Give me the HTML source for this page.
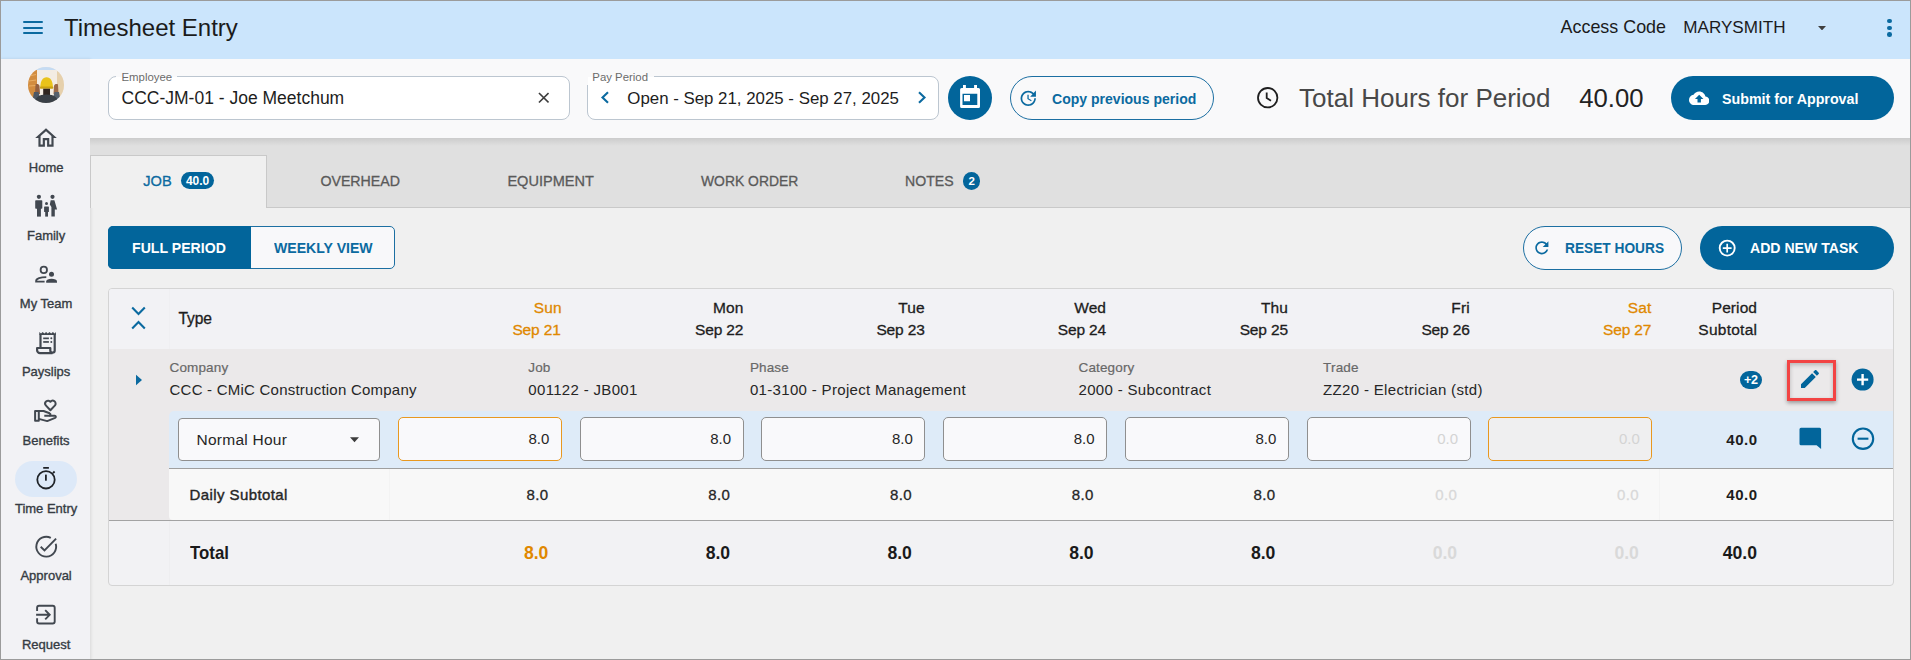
<!DOCTYPE html>
<html><head><meta charset="utf-8"><title>Timesheet Entry</title>
<style>
html,body{margin:0;padding:0;}
body{width:1911px;height:660px;position:relative;overflow:hidden;background:#f0f0f0;font-family:"Liberation Sans",sans-serif;}
.t{position:absolute;white-space:nowrap;line-height:1;}
.b{position:absolute;}
</style></head><body>
<div class="b" style="left:0px;top:0px;width:1911px;height:59px;background:#cbe5fc;"></div>
<div class="b" style="left:22.8px;top:21px;width:19.999999999999996px;height:2.1999999999999993px;background:#0b6aa0;border-radius:1px;"></div>
<div class="b" style="left:22.8px;top:26.6px;width:19.999999999999996px;height:2.1999999999999993px;background:#0b6aa0;border-radius:1px;"></div>
<div class="b" style="left:22.8px;top:32.1px;width:19.999999999999996px;height:2.200000000000003px;background:#0b6aa0;border-radius:1px;"></div>
<div class="t" style="top:16.00px;font-size:24px;font-weight:400;color:#1b1b1b;left:64.00px;">Timesheet Entry</div>
<div class="t" style="top:19.00px;font-size:17.9px;font-weight:400;color:#1b1b1b;left:1560.60px;">Access Code</div>
<div class="t" style="top:19.00px;font-size:17.1px;font-weight:400;color:#1b1b1b;left:1683.30px;">MARYSMITH</div>
<svg class="b" style="left:1818.4px;top:26px;" width="8" height="4.4" viewBox="0 0 8 4.4"><path d="M0 0h8L4 4.4z" fill="#3f3f3f"/></svg>
<div class="b" style="left:1887.4px;top:18.8px;width:4.599999999999909px;height:4.600000000000001px;background:#0b6aa0;border-radius:50%;"></div>
<div class="b" style="left:1887.4px;top:25.5px;width:4.599999999999909px;height:4.600000000000001px;background:#0b6aa0;border-radius:50%;"></div>
<div class="b" style="left:1887.4px;top:31.999999999999996px;width:4.599999999999909px;height:4.599999999999998px;background:#0b6aa0;border-radius:50%;"></div>
<div class="b" style="left:0px;top:59px;width:90px;height:601px;background:#f2f2f5;box-shadow:1px 0 3px rgba(0,0,0,0.10);"></div>
<svg class="b" style="left:28px;top:66.6px;" width="36" height="36" viewBox="0 0 36 36"><defs><clipPath id="av"><circle cx="18" cy="18" r="18"/></clipPath></defs><g clip-path="url(#av)"><rect width="36" height="36" fill="#efe6da"/><rect x="8" y="0" width="22" height="3" fill="#c5dbf3"/><path d="M0 4L9 3 9.5 31H0Z" fill="#d28c3f"/><path d="M1 9L8 7.5M1 14L8 13M1 19L8 18.5" stroke="#e9ad62" stroke-width="1.2"/><path d="M29 3L36 4V31H28Z" fill="#e6d0ac"/><rect x="9" y="3" width="20" height="27" fill="#f3ece3"/><path d="M7.5 17.5C9 16.5 11 17 11.5 19L12 27H7Z" fill="#95603f"/><path d="M30 17.5C28.5 16.5 26.5 17 26 19L25.5 27H30.5Z" fill="#9c6a48"/><path d="M4 36L6 25 10.5 25 12 31Z" fill="#4e5866"/><path d="M33 36L31 25 26.5 25 25 31Z" fill="#56606c"/><path d="M12.3 21C12.3 13.8 14.6 10.2 18.6 10.2S24.9 13.8 24.9 21Z" fill="#e9c31a"/><rect x="11.8" y="19.6" width="13.6" height="2.2" rx="1.1" fill="#caa212"/><path d="M15.2 21.8H22V28.5H15.2Z" fill="#2f2520"/><path d="M7 36C7 30.5 10.5 27.5 18.5 27.5S30 30.5 30 36Z" fill="#393f46"/></g></svg>
<div class="b" style="left:15px;top:461px;width:62px;height:35.5px;background:#dde9f8;border-radius:18px;"></div>
<div class="t" style="top:161.00px;font-size:13px;font-weight:400;color:#363c43;left:-253.90px;width:600px;text-align:center;-webkit-text-stroke:0.35px #363c43;">Home</div>
<div class="t" style="top:229.00px;font-size:13px;font-weight:400;color:#363c43;left:-253.90px;width:600px;text-align:center;-webkit-text-stroke:0.35px #363c43;">Family</div>
<div class="t" style="top:297.00px;font-size:13px;font-weight:400;color:#363c43;left:-253.90px;width:600px;text-align:center;-webkit-text-stroke:0.35px #363c43;">My Team</div>
<div class="t" style="top:365.00px;font-size:13px;font-weight:400;color:#363c43;left:-253.90px;width:600px;text-align:center;-webkit-text-stroke:0.35px #363c43;">Payslips</div>
<div class="t" style="top:434.00px;font-size:13px;font-weight:400;color:#363c43;left:-253.90px;width:600px;text-align:center;-webkit-text-stroke:0.35px #363c43;">Benefits</div>
<div class="t" style="top:502.00px;font-size:13px;font-weight:400;color:#363c43;left:-253.90px;width:600px;text-align:center;-webkit-text-stroke:0.35px #363c43;">Time Entry</div>
<div class="t" style="top:569.00px;font-size:13px;font-weight:400;color:#363c43;left:-253.90px;width:600px;text-align:center;-webkit-text-stroke:0.35px #363c43;">Approval</div>
<div class="t" style="top:638.00px;font-size:13px;font-weight:400;color:#363c43;left:-253.90px;width:600px;text-align:center;-webkit-text-stroke:0.35px #363c43;">Request</div>
<svg class="b" style="left:33px;top:125px;" width="26" height="26" viewBox="0 0 24 24"><path fill="#424850" d="M12 5.69l5 4.5V18h-2v-6H9v6H7v-7.81l5-4.5M12 3L2 12h3v8h6v-6h2v6h6v-8h3L12 3z"/></svg>
<svg class="b" style="left:30px;top:190px;" width="32" height="30" viewBox="0 0 32 30"><g fill="#424850"><circle cx="8.9" cy="6.8" r="2.1"/><rect x="5.2" y="10.3" width="7.1" height="8.4" rx="0.8"/><rect x="7" y="17" width="3.9" height="9.6"/><circle cx="16.5" cy="13.4" r="1.5"/><rect x="14.1" y="16.6" width="4.8" height="5.3" rx="0.5"/><rect x="15.2" y="21" width="2.8" height="5.6"/><circle cx="22.5" cy="6.8" r="2.1"/><path d="M20.7 10.3H24.4L27.1 19.6H24.8V26.6H21.4V17L19.8 14.6Z"/></g></svg>
<svg class="b" style="left:30px;top:262px;" width="32" height="26" viewBox="0 0 32 26"><g fill="none" stroke="#424850" stroke-width="1.8"><circle cx="13.8" cy="7.9" r="3.2"/><path d="M16.3 15.2C10.5 15.2 6.1 16.6 6.1 19V19.7H14.6"/></g><g fill="#424850"><circle cx="21.5" cy="12.2" r="2.5"/><path d="M16.2 20.7V19.3C16.2 17.6 18.6 16.7 21.6 16.7S27 17.6 27 19.3V20.7Z"/></g></svg>
<svg class="b" style="left:30px;top:328px;" width="32" height="30" viewBox="0 0 32 30"><g fill="none" stroke="#424850" stroke-width="2.2" stroke-linejoin="round"><path d="M10.5 19.5V6.2M24.7 6.2V22.5A2.2 2.2 0 0 1 20.3 22.5V20H7.1V22.2A2.9 2.9 0 0 0 10 25.1H22.5"/></g><path fill="#424850" d="M9.3 4.1L11 5.5 12.7 4.1 14.4 5.5 16.1 4.1 17.8 5.5 19.5 4.1 21.2 5.5 22.9 4.1 24.6 5.5 25.9 4.1V7H9.3Z"/><g fill="#424850"><rect x="13.2" y="9.5" width="5.7" height="1.7"/><rect x="13.2" y="13.1" width="5.7" height="1.7"/><circle cx="21.3" cy="10.3" r="1"/><circle cx="21.3" cy="13.9" r="1"/></g></svg>
<svg class="b" style="left:30px;top:396px;" width="32" height="30" viewBox="0 0 32 30"><g fill="none" stroke="#424850" stroke-width="2" stroke-linejoin="round"><path d="M20.4 14.2L15.8 9.4A2.9 2.9 0 0 1 20.4 5.8A2.9 2.9 0 0 1 25 9.4Z"/><rect x="5.1" y="14.9" width="3.7" height="9.8"/><path d="M8.8 15H13.6L19.6 17.3C21 17.9 20.6 19.7 19.1 19.7H14.3"/><path d="M8.8 22.9L17.2 25.1L25.1 21.9C26.3 21.3 25.9 19.6 24.6 19.7H19.2"/></g></svg>
<svg class="b" style="left:30px;top:463px;" width="32" height="30" viewBox="0 0 32 30"><g fill="none" stroke="#1f2328" stroke-width="1.8"><circle cx="16" cy="16.8" r="8.7"/><path d="M13.2 4.9H18.9M23 10.1L24.6 8.5"/></g><rect x="15" y="11.6" width="1.8" height="6.1" fill="#1f2328"/></svg>
<svg class="b" style="left:30px;top:532px;" width="32" height="30" viewBox="0 0 32 30"><g fill="none" stroke="#424850" stroke-width="1.9"><path d="M25.7 11.8A9.9 9.9 0 1 1 20.8 5.9"/><path d="M10.7 14.8L14.5 18.5L26.1 6.6"/></g></svg>
<svg class="b" style="left:30px;top:600px;" width="32" height="30" viewBox="0 0 32 30"><g fill="none" stroke="#424850" stroke-width="1.9"><path d="M7.1 10.9V7.8A2 2 0 0 1 9.1 5.8H22.7A2 2 0 0 1 24.7 7.8V21.5A2 2 0 0 1 22.7 23.5H9.1A2 2 0 0 1 7.1 21.5V18.2"/><path d="M6.1 14.8H19.6M15.2 10.2L19.7 14.8 15.2 19.4"/></g></svg>
<div class="b" style="left:90px;top:59px;width:1821px;height:79px;background:#f9f9fa;"></div>
<div class="b" style="left:108px;top:76px;width:461.5px;height:43.5px;border:1px solid #bcc6d0;border-radius:8px;background:#fff;box-sizing:border-box;"></div>
<div class="b" style="left:116px;top:74px;width:61px;height:5px;background:#f9f9fa;"></div>
<div class="b" style="left:116px;top:76.5px;width:61px;height:2.5px;background:#fff;"></div>
<div class="t" style="top:72.00px;font-size:11.4px;font-weight:400;color:#6b6b6b;left:121.50px;">Employee</div>
<div class="t" style="top:90.00px;font-size:17.5px;font-weight:400;color:#1d1d1d;left:121.50px;">CCC-JM-01 - Joe Meetchum</div>
<svg class="b" style="left:537.5px;top:92px;" width="11.5" height="11.5" viewBox="0 0 12 12"><path d="M1 1L11 11M11 1L1 11" stroke="#3d3d3d" stroke-width="1.7"/></svg>
<div class="b" style="left:587px;top:76px;width:352px;height:43.599999999999994px;border:1px solid #bcc6d0;border-radius:8px;background:#fff;box-sizing:border-box;"></div>
<div class="b" style="left:585.5px;top:74px;width:68.0px;height:11px;background:#f9f9fa;"></div>
<div class="b" style="left:588px;top:77px;width:65.5px;height:8px;background:#fff;"></div>
<div class="t" style="top:72.00px;font-size:11.4px;font-weight:400;color:#6b6b6b;left:592.30px;">Pay Period</div>
<svg class="b" style="left:599.5px;top:90.8px;" width="10" height="13" viewBox="0 0 10 13"><path d="M8 1.2L2.5 6.5 8 11.8" fill="none" stroke="#0b6aa0" stroke-width="2.1"/></svg>
<div class="t" style="top:91.00px;font-size:16.85px;font-weight:400;color:#1d1d1d;left:627.30px;">Open - Sep 21, 2025 - Sep 27, 2025</div>
<svg class="b" style="left:916.5px;top:90.8px;" width="10" height="13" viewBox="0 0 10 13"><path d="M2 1.2L7.5 6.5 2 11.8" fill="none" stroke="#0b6aa0" stroke-width="2.1"/></svg>
<div class="b" style="left:948px;top:76px;width:44px;height:44px;background:#02659b;border-radius:50%;"></div>
<svg class="b" style="left:955px;top:80px;" width="30" height="32" viewBox="0 0 30 32"><path fill="#fff" fill-rule="evenodd" d="M6.6 8H8V5.1h2.9V8h8.2V5.1H22V8h1.5A1.5 1.5 0 0 1 25 9.5v16.9a1.5 1.5 0 0 1-1.5 1.5H6.6a1.5 1.5 0 0 1-1.5-1.5V9.5A1.5 1.5 0 0 1 6.6 8zM7.5 13.8V25h14.8V13.8zM9 15h6v6.3H9z"/></svg>
<div class="b" style="left:1009.5px;top:76px;width:204.70000000000005px;height:44px;border:1.5px solid #1c6fa2;border-radius:22px;box-sizing:border-box;"></div>
<svg class="b" style="left:1018px;top:88.3px;" width="20.5" height="20.5" viewBox="0 0 24 24"><path fill="#0b6aa0" d="M21 10.12h-6.78l2.74-2.82c-2.73-2.7-7.15-2.8-9.88-.1-2.73 2.71-2.73 7.08 0 9.79s7.15 2.71 9.88 0C18.32 15.65 19 14.08 19 12.1h2c0 1.98-.88 4.55-2.64 6.29-3.51 3.48-9.21 3.48-12.72 0-3.5-3.47-3.53-9.11-.02-12.58s9.14-3.47 12.65 0L21 3v7.12zM12.5 8v4.25l3.5 2.08-.72 1.21L11 13V8h1.5z"/></svg>
<div class="t" style="top:91.00px;font-size:15.1px;font-weight:700;color:#0b6aa0;left:1051.90px;transform:scaleX(0.93);transform-origin:0 0;">Copy previous period</div>
<svg class="b" style="left:1256px;top:86px;" width="24" height="24" viewBox="0 0 24 24"><g fill="none" stroke="#1f1f1f" stroke-width="1.8"><circle cx="11.7" cy="11.7" r="9.7"/><path d="M10.7 6.6v5.5l4.3 2.6"/></g></svg>
<div class="t" style="top:85.00px;font-size:26px;font-weight:400;color:#484848;left:1299.10px;">Total Hours for Period</div>
<div class="t" style="top:86.00px;font-size:25.7px;font-weight:400;color:#222;left:1579.30px;">40.00</div>
<div class="b" style="left:1671px;top:76px;width:223px;height:44px;background:#02659b;border-radius:22px;"></div>
<svg class="b" style="left:1688.5px;top:87.5px;" width="20.4" height="20.4" viewBox="0 0 24 24"><path fill="#fff" d="M19.35 10.04C18.67 6.59 15.64 4 12 4 9.11 4 6.6 5.64 5.35 8.04 2.34 8.36 0 10.91 0 14c0 3.31 2.69 6 6 6h13c2.76 0 5-2.24 5-5 0-2.64-2.05-4.78-4.65-4.96zM14 13v4h-4v-4H7l5-5 5 5h-3z"/></svg>
<div class="t" style="top:92.00px;font-size:14.26px;font-weight:700;color:#fff;left:1722.00px;">Submit for Approval</div>
<div class="b" style="left:90px;top:138px;width:1821px;height:70px;background:#e0e0e0;"></div>
<div class="b" style="left:90px;top:138px;width:1821px;height:8px;background:linear-gradient(rgba(0,0,0,0.09),rgba(0,0,0,0));"></div>
<div class="b" style="left:90px;top:207px;width:1821px;height:1px;background:#c9c9c9;"></div>
<div class="b" style="left:90px;top:155px;width:176.5px;height:53px;background:#f0f0f0;border:1px solid #c9c9c9;border-bottom:none;box-sizing:border-box;"></div>
<div class="t" style="top:174.00px;font-size:14.6px;font-weight:400;color:#0b6aa0;left:143.30px;-webkit-text-stroke:0.3px #0b6aa0;">JOB</div>
<div class="b" style="left:181px;top:172px;width:33.19999999999999px;height:17.400000000000006px;background:#02659b;border-radius:9px;"></div>
<div class="t" style="top:175.00px;font-size:12px;font-weight:700;color:#fff;left:-102.40px;width:600px;text-align:center;">40.0</div>
<div class="t" style="top:174.00px;font-size:14.2px;font-weight:400;color:#5a5a5a;left:320.40px;-webkit-text-stroke:0.3px #5a5a5a;">OVERHEAD</div>
<div class="t" style="top:174.00px;font-size:14.56px;font-weight:400;color:#5a5a5a;left:507.40px;-webkit-text-stroke:0.3px #5a5a5a;">EQUIPMENT</div>
<div class="t" style="top:175.00px;font-size:13.9px;font-weight:400;color:#5a5a5a;left:701.00px;-webkit-text-stroke:0.3px #5a5a5a;">WORK ORDER</div>
<div class="t" style="top:174.00px;font-size:14.1px;font-weight:400;color:#5a5a5a;left:905.00px;-webkit-text-stroke:0.3px #5a5a5a;">NOTES</div>
<div class="b" style="left:962.8px;top:172.3px;width:17.5px;height:17.5px;background:#02659b;border-radius:50%;"></div>
<div class="t" style="top:176.00px;font-size:11.5px;font-weight:700;color:#fff;left:671.60px;width:600px;text-align:center;">2</div>
<div class="b" style="left:107.8px;top:226px;width:286.9px;height:43.39999999999998px;border:1.5px solid #1c6fa2;border-radius:5px;background:#f8f8fa;box-sizing:border-box;"></div>
<div class="b" style="left:107.8px;top:226px;width:143.7px;height:43.39999999999998px;background:#02659b;border-radius:5px 0 0 5px;"></div>
<div class="t" style="top:240.00px;font-size:15.2px;font-weight:700;color:#fff;left:132.40px;transform:scaleX(0.93);transform-origin:0 0;">FULL PERIOD</div>
<div class="t" style="top:240.00px;font-size:15.2px;font-weight:700;color:#0b6aa0;left:273.90px;transform:scaleX(0.928);transform-origin:0 0;">WEEKLY VIEW</div>
<div class="b" style="left:1523px;top:226px;width:158.5999999999999px;height:43.60000000000002px;border:1.5px solid #1c6fa2;border-radius:22px;background:#f8f8fa;box-sizing:border-box;"></div>
<svg class="b" style="left:1531.7px;top:238.1px;" width="19.7" height="19.7" viewBox="0 0 24 24"><path fill="#0b6aa0" d="M17.65 6.35C16.2 4.9 14.21 4 12 4c-4.42 0-7.99 3.58-7.99 8s3.57 8 7.99 8c3.73 0 6.84-2.55 7.73-6h-2.08c-.82 2.33-3.04 4-5.65 4-3.31 0-6-2.69-6-6s2.69-6 6-6c1.66 0 3.14.69 4.22 1.78L13 11h7V4l-2.35 2.35z"/></svg>
<div class="t" style="top:240.00px;font-size:15.2px;font-weight:700;color:#0b6aa0;left:1565.00px;transform:scaleX(0.903);transform-origin:0 0;">RESET HOURS</div>
<div class="b" style="left:1700px;top:226px;width:194px;height:43.60000000000002px;background:#02659b;border-radius:22px;"></div>
<svg class="b" style="left:1717px;top:238px;" width="20" height="20" viewBox="0 0 20 20"><g fill="none" stroke="#fff" stroke-width="1.9"><circle cx="10.2" cy="10.1" r="7.5"/><path d="M10.2 5.8v8.8M5.8 10.1h8.8" stroke-width="1.7"/></g></svg>
<div class="t" style="top:240.00px;font-size:15.2px;font-weight:700;color:#fff;left:1750.30px;transform:scaleX(0.927);transform-origin:0 0;">ADD NEW TASK</div>
<div class="b" style="left:108px;top:288px;width:1785.5px;height:298px;border:1px solid #d4d4d4;border-radius:4px;box-sizing:border-box;overflow:hidden;background:#f2f2f4;"><div class="b" style="left:0;top:0;width:100%;height:61px;background:#f2f2f5;"></div><div class="b" style="left:0;top:60px;width:100%;height:172px;background:#ebe9ea;"></div><div class="b" style="left:60px;top:121.5px;width:1730px;height:58.5px;background:#deebf8;border-bottom:1px solid #9f9f9f;box-sizing:border-box;border-radius:5px 0 0 0;"></div><div class="b" style="left:60px;top:180px;width:1730px;height:51px;background:#f8f8f8;border-radius:0 0 0 4px;"></div><div class="b" style="left:0;top:231px;width:100%;height:1px;background:#a3a3a3;"></div></div>
<div class="b" style="left:389px;top:469px;width:1px;height:51px;background:#f3f3f3;"></div>
<div class="b" style="left:169px;top:521px;width:1px;height:64px;background:#eeeef0;"></div>
<div class="b" style="left:169px;top:289px;width:1px;height:60px;background:#efeff2;"></div>
<div class="b" style="left:1659px;top:469px;width:1px;height:51px;background:#f3f3f3;"></div>
<svg class="b" style="left:131px;top:306px;" width="15" height="24" viewBox="0 0 15 24"><g fill="none" stroke="#0b6aa0" stroke-width="2.1"><path d="M1.2 1.6L7.5 8 13.8 1.6"/><path d="M1.2 22.4L7.5 16 13.8 22.4"/></g></svg>
<div class="t" style="top:311.00px;font-size:15.6px;font-weight:400;color:#1d1d1d;letter-spacing:-0.1px;left:178.50px;-webkit-text-stroke:0.3px #1d1d1d;">Type</div>
<div class="t" style="top:300.00px;font-size:15.5px;font-weight:400;color:#e08800;letter-spacing:0.1px;right:1349.40px;margin-right:-0.1px;-webkit-text-stroke:0.3px #e08800;">Sun</div>
<div class="t" style="top:322.00px;font-size:15.5px;font-weight:400;color:#e08800;letter-spacing:-0.15px;right:1350.40px;margin-right:--0.15px;-webkit-text-stroke:0.3px #e08800;">Sep 21</div>
<div class="t" style="top:300.00px;font-size:15.5px;font-weight:400;color:#1d1d1d;letter-spacing:0.1px;right:1167.70px;margin-right:-0.1px;-webkit-text-stroke:0.3px #1d1d1d;">Mon</div>
<div class="t" style="top:322.00px;font-size:15.5px;font-weight:400;color:#1d1d1d;letter-spacing:-0.15px;right:1167.70px;margin-right:--0.15px;-webkit-text-stroke:0.3px #1d1d1d;">Sep 22</div>
<div class="t" style="top:300.00px;font-size:15.5px;font-weight:400;color:#1d1d1d;letter-spacing:0.1px;right:986.40px;margin-right:-0.1px;-webkit-text-stroke:0.3px #1d1d1d;">Tue</div>
<div class="t" style="top:322.00px;font-size:15.5px;font-weight:400;color:#1d1d1d;letter-spacing:-0.15px;right:986.40px;margin-right:--0.15px;-webkit-text-stroke:0.3px #1d1d1d;">Sep 23</div>
<div class="t" style="top:300.00px;font-size:15.5px;font-weight:400;color:#1d1d1d;letter-spacing:0.1px;right:805.00px;margin-right:-0.1px;-webkit-text-stroke:0.3px #1d1d1d;">Wed</div>
<div class="t" style="top:322.00px;font-size:15.5px;font-weight:400;color:#1d1d1d;letter-spacing:-0.15px;right:805.00px;margin-right:--0.15px;-webkit-text-stroke:0.3px #1d1d1d;">Sep 24</div>
<div class="t" style="top:300.00px;font-size:15.5px;font-weight:400;color:#1d1d1d;letter-spacing:0.1px;right:623.10px;margin-right:-0.1px;-webkit-text-stroke:0.3px #1d1d1d;">Thu</div>
<div class="t" style="top:322.00px;font-size:15.5px;font-weight:400;color:#1d1d1d;letter-spacing:-0.15px;right:623.10px;margin-right:--0.15px;-webkit-text-stroke:0.3px #1d1d1d;">Sep 25</div>
<div class="t" style="top:300.00px;font-size:15.5px;font-weight:400;color:#1d1d1d;letter-spacing:0.1px;right:441.40px;margin-right:-0.1px;-webkit-text-stroke:0.3px #1d1d1d;">Fri</div>
<div class="t" style="top:322.00px;font-size:15.5px;font-weight:400;color:#1d1d1d;letter-spacing:-0.15px;right:441.40px;margin-right:--0.15px;-webkit-text-stroke:0.3px #1d1d1d;">Sep 26</div>
<div class="t" style="top:300.00px;font-size:15.5px;font-weight:400;color:#e08800;letter-spacing:0.1px;right:259.80px;margin-right:-0.1px;-webkit-text-stroke:0.3px #e08800;">Sat</div>
<div class="t" style="top:322.00px;font-size:15.5px;font-weight:400;color:#e08800;letter-spacing:-0.15px;right:259.80px;margin-right:--0.15px;-webkit-text-stroke:0.3px #e08800;">Sep 27</div>
<div class="t" style="top:300.00px;font-size:15.5px;font-weight:400;color:#1d1d1d;letter-spacing:0.1px;right:154.00px;margin-right:-0.1px;-webkit-text-stroke:0.3px #1d1d1d;">Period</div>
<div class="t" style="top:322.00px;font-size:15.5px;font-weight:400;color:#1d1d1d;letter-spacing:0.25px;right:154.00px;margin-right:-0.25px;-webkit-text-stroke:0.3px #1d1d1d;">Subtotal</div>
<svg class="b" style="left:135px;top:374px;" width="8" height="12" viewBox="0 0 8 12"><path d="M1 0.8L7 6 1 11.2z" fill="#0b6aa0"/></svg>
<div class="t" style="top:361.00px;font-size:13.5px;font-weight:400;color:#686868;letter-spacing:0.15px;left:169.50px;-webkit-text-stroke:0.2px #686868;">Company</div>
<div class="t" style="top:382.00px;font-size:15px;font-weight:400;color:#262626;letter-spacing:0.23px;left:169.50px;">CCC - CMiC Construction Company</div>
<div class="t" style="top:361.00px;font-size:13.5px;font-weight:400;color:#686868;letter-spacing:0.15px;left:528.30px;-webkit-text-stroke:0.2px #686868;">Job</div>
<div class="t" style="top:382.00px;font-size:15px;font-weight:400;color:#262626;letter-spacing:0.33px;left:528.30px;">001122 - JB001</div>
<div class="t" style="top:361.00px;font-size:13.5px;font-weight:400;color:#686868;letter-spacing:0.15px;left:749.90px;-webkit-text-stroke:0.2px #686868;">Phase</div>
<div class="t" style="top:382.00px;font-size:15px;font-weight:400;color:#262626;letter-spacing:0.33px;left:749.90px;">01-3100 - Project Management</div>
<div class="t" style="top:361.00px;font-size:13.5px;font-weight:400;color:#686868;letter-spacing:0.15px;left:1078.50px;-webkit-text-stroke:0.2px #686868;">Category</div>
<div class="t" style="top:382.00px;font-size:15px;font-weight:400;color:#262626;letter-spacing:0.33px;left:1078.50px;">2000 - Subcontract</div>
<div class="t" style="top:361.00px;font-size:13.5px;font-weight:400;color:#686868;letter-spacing:0.15px;left:1323.10px;-webkit-text-stroke:0.2px #686868;">Trade</div>
<div class="t" style="top:382.00px;font-size:15px;font-weight:400;color:#262626;letter-spacing:0.33px;left:1323.10px;">ZZ20 - Electrician (std)</div>
<div class="b" style="left:1739.8px;top:371px;width:22.200000000000045px;height:17.80000000000001px;background:#02659b;border-radius:9px;"></div>
<div class="t" style="top:374.00px;font-size:12.6px;font-weight:700;color:#fff;left:1450.80px;width:600px;text-align:center;letter-spacing:-0.3px;">+2</div>
<div class="b" style="left:1787px;top:360px;width:49px;height:41px;border:3px solid #f24444;box-sizing:border-box;box-shadow:0 2px 4px rgba(0,0,0,0.35), inset 0 2px 4px rgba(0,0,0,0.22);"></div>
<svg class="b" style="left:1798px;top:367px;" width="24" height="24" viewBox="0 0 24 24"><path fill="#02659b" d="M3 17.25V21h3.75L17.81 9.94l-3.75-3.75L3 17.25zM20.71 7.04c.39-.39.39-1.02 0-1.41l-2.34-2.34c-.39-.39-1.02-.39-1.41 0l-1.83 1.83 3.75 3.75 1.83-1.83z"/></svg>
<svg class="b" style="left:1851px;top:368px;" width="24" height="24" viewBox="0 0 24 24"><circle cx="11.6" cy="11.6" r="11" fill="#02659b"/><path d="M11.6 6v11.2M6 11.6h11.2" stroke="#fff" stroke-width="2.4"/></svg>
<div class="b" style="left:178.4px;top:417.5px;width:201.29999999999998px;height:43.0px;border:1px solid #8f8f8f;border-radius:4px;background:#f9f9fb;box-sizing:border-box;"></div>
<div class="t" style="top:432.00px;font-size:15.5px;font-weight:400;color:#262626;letter-spacing:0.25px;left:196.50px;">Normal Hour</div>
<svg class="b" style="left:349.5px;top:436.5px;" width="9" height="6" viewBox="0 0 9 6"><path d="M0 0.3h9L4.5 5.3z" fill="#3d3d3d"/></svg>
<div class="b" style="left:397.8px;top:417.3px;width:163.99999999999994px;height:43.5px;border:1px solid #e8981f;border-radius:5px;background:#f9f9fb;box-sizing:border-box;"></div>
<div class="t" style="top:431.00px;font-size:15px;font-weight:400;color:#262626;right:1361.70px;">8.0</div>
<div class="b" style="left:579.5px;top:417.3px;width:164.0px;height:43.5px;border:1px solid #8f8f8f;border-radius:5px;background:#f9f9fb;box-sizing:border-box;"></div>
<div class="t" style="top:431.00px;font-size:15px;font-weight:400;color:#262626;right:1179.95px;">8.0</div>
<div class="b" style="left:761.3px;top:417.3px;width:164.0px;height:43.5px;border:1px solid #8f8f8f;border-radius:5px;background:#f9f9fb;box-sizing:border-box;"></div>
<div class="t" style="top:431.00px;font-size:15px;font-weight:400;color:#262626;right:998.20px;">8.0</div>
<div class="b" style="left:943.0px;top:417.3px;width:164.0px;height:43.5px;border:1px solid #8f8f8f;border-radius:5px;background:#f9f9fb;box-sizing:border-box;"></div>
<div class="t" style="top:431.00px;font-size:15px;font-weight:400;color:#262626;right:816.45px;">8.0</div>
<div class="b" style="left:1124.8px;top:417.3px;width:164.0px;height:43.5px;border:1px solid #8f8f8f;border-radius:5px;background:#f9f9fb;box-sizing:border-box;"></div>
<div class="t" style="top:431.00px;font-size:15px;font-weight:400;color:#262626;right:634.70px;">8.0</div>
<div class="b" style="left:1306.5px;top:417.3px;width:164.0px;height:43.5px;border:1px solid #8f8f8f;border-radius:5px;background:#f9f9fb;box-sizing:border-box;"></div>
<div class="t" style="top:431.00px;font-size:15px;font-weight:400;color:#d4d4d4;right:452.95px;">0.0</div>
<div class="b" style="left:1488.3px;top:417.3px;width:164.0px;height:43.5px;border:1px solid #e8981f;border-radius:5px;background:#efeff0;box-sizing:border-box;"></div>
<div class="t" style="top:431.00px;font-size:15px;font-weight:400;color:#d4d4d4;right:271.20px;">0.0</div>
<div class="t" style="top:432.00px;font-size:15px;font-weight:700;color:#1d1d1d;letter-spacing:0.5px;right:154.00px;margin-right:-0.5px;">40.0</div>
<svg class="b" style="left:1795px;top:424px;" width="32" height="28" viewBox="0 0 32 28"><path fill="#02659b" d="M6 3.8H24.6A1.5 1.5 0 0 1 26.1 5.3V25L21.6 21.2H6A1.5 1.5 0 0 1 4.5 19.7V5.3A1.5 1.5 0 0 1 6 3.8Z"/></svg>
<svg class="b" style="left:1850px;top:426px;" width="26" height="26" viewBox="0 0 26 26"><g fill="none" stroke="#02659b" stroke-width="2.1"><circle cx="13" cy="12.7" r="10.2"/><path d="M7.6 12.7h10.8"/></g></svg>
<div class="t" style="top:487.00px;font-size:15px;font-weight:400;color:#262626;letter-spacing:0.4px;left:189.60px;-webkit-text-stroke:0.4px #262626;">Daily Subtotal</div>
<div class="t" style="top:487.00px;font-size:15px;font-weight:400;color:#262626;letter-spacing:0.4px;right:1362.80px;margin-right:-0.4px;-webkit-text-stroke:0.3px #262626;">8.0</div>
<div class="t" style="top:487.00px;font-size:15px;font-weight:400;color:#262626;letter-spacing:0.4px;right:1181.05px;margin-right:-0.4px;-webkit-text-stroke:0.3px #262626;">8.0</div>
<div class="t" style="top:487.00px;font-size:15px;font-weight:400;color:#262626;letter-spacing:0.4px;right:999.30px;margin-right:-0.4px;-webkit-text-stroke:0.3px #262626;">8.0</div>
<div class="t" style="top:487.00px;font-size:15px;font-weight:400;color:#262626;letter-spacing:0.4px;right:817.55px;margin-right:-0.4px;-webkit-text-stroke:0.3px #262626;">8.0</div>
<div class="t" style="top:487.00px;font-size:15px;font-weight:400;color:#262626;letter-spacing:0.4px;right:635.80px;margin-right:-0.4px;-webkit-text-stroke:0.3px #262626;">8.0</div>
<div class="t" style="top:487.00px;font-size:15px;font-weight:400;color:#d9d9d9;letter-spacing:0.4px;right:454.05px;margin-right:-0.4px;-webkit-text-stroke:0.3px #d9d9d9;">0.0</div>
<div class="t" style="top:487.00px;font-size:15px;font-weight:400;color:#d9d9d9;letter-spacing:0.4px;right:272.30px;margin-right:-0.4px;-webkit-text-stroke:0.3px #d9d9d9;">0.0</div>
<div class="t" style="top:487.00px;font-size:15px;font-weight:700;color:#1d1d1d;letter-spacing:0.5px;right:154.00px;margin-right:-0.5px;">40.0</div>
<div class="t" style="top:544.00px;font-size:18.4px;font-weight:700;color:#1a1a1a;left:189.60px;transform:scaleX(0.915);transform-origin:0 0;">Total</div>
<div class="t" style="top:545.00px;font-size:17.6px;font-weight:700;color:#e08800;right:1362.60px;">8.0</div>
<div class="t" style="top:545.00px;font-size:17.6px;font-weight:700;color:#1a1a1a;right:1180.85px;">8.0</div>
<div class="t" style="top:545.00px;font-size:17.6px;font-weight:700;color:#1a1a1a;right:999.10px;">8.0</div>
<div class="t" style="top:545.00px;font-size:17.6px;font-weight:700;color:#1a1a1a;right:817.35px;">8.0</div>
<div class="t" style="top:545.00px;font-size:17.6px;font-weight:700;color:#1a1a1a;right:635.60px;">8.0</div>
<div class="t" style="top:545.00px;font-size:17.6px;font-weight:700;color:#d9d9d9;right:453.85px;">0.0</div>
<div class="t" style="top:545.00px;font-size:17.6px;font-weight:700;color:#d9d9d9;right:272.10px;">0.0</div>
<div class="t" style="top:545.00px;font-size:17.6px;font-weight:700;color:#1a1a1a;right:154.00px;">40.0</div>
<div class="b" style="left:0px;top:0px;width:1911px;height:660px;border:1px solid #9b9b9b;box-sizing:border-box;"></div>
</body></html>
